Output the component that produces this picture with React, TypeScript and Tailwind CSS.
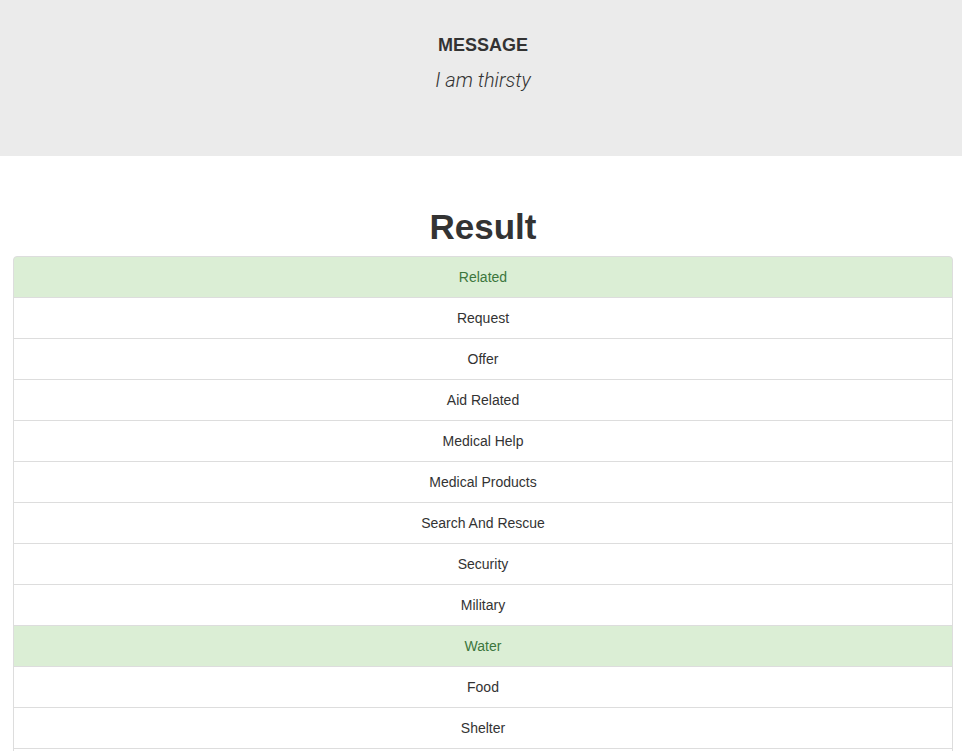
import React from "react";

const cats: [string, boolean][] = [
  ["Related", true],
  ["Request", false],
  ["Offer", false],
  ["Aid Related", false],
  ["Medical Help", false],
  ["Medical Products", false],
  ["Search And Rescue", false],
  ["Security", false],
  ["Military", false],
  ["Water", true],
  ["Food", false],
  ["Shelter", false],
  ["Clothing", false],
  ["Money", false],
  ["Missing People", false],
  ["Refugees", false],
  ["Death", false],
  ["Other Aid", false],
  ["Infrastructure Related", false],
  ["Transport", false],
  ["Buildings", false],
  ["Electricity", false],
  ["Tools", false],
  ["Hospitals", false],
  ["Shops", false],
  ["Aid Centers", false],
  ["Other Infrastructure", false],
  ["Weather Related", false],
  ["Floods", false],
  ["Storm", false],
  ["Fire", false],
  ["Earthquake", false],
  ["Cold", false],
  ["Other Weather", false],
  ["Direct Report", false],
];

export default function App() {
  return (
    <div
      className="bg-white text-[#333] min-h-screen"
      style={{ fontFamily: '"Liberation Sans", Arial, sans-serif' }}
    >
      <div className="bg-[#ebebeb] h-[156px] pt-[35px] box-border">
        <div className="ml-[13px] w-[940px] text-center">
          <div className="text-[18px] leading-[20px] font-bold">MESSAGE</div>
          <div
            className="mt-[11px] text-[20px] leading-[29.4px] italic font-light"
            style={{ fontFamily: 'Roboto, "Liberation Sans", sans-serif' }}
          >
            I am thirsty
          </div>
        </div>
      </div>
      <div className="ml-[13px] w-[940px] pt-[52px] pb-5">
        <h1 className="text-center text-[35px] leading-[38px] font-bold mb-[10px]">
          Result
        </h1>
        <ul className="flex flex-col">
          {cats.map(([name, on], i) => (
            <li
              key={name}
              className={`border border-[#ddd] px-[15px] py-[10px] text-center text-[14px] leading-[20px] -mb-px ${
                on ? "bg-[#dbeed5] text-[#3c763d]" : "bg-white text-[#333]"
              } ${i === 0 ? "rounded-t-[4px]" : ""} ${
                i === cats.length - 1 ? "rounded-b-[4px]" : ""
              }`}
            >
              {name}
            </li>
          ))}
        </ul>
      </div>
    </div>
  );
}
